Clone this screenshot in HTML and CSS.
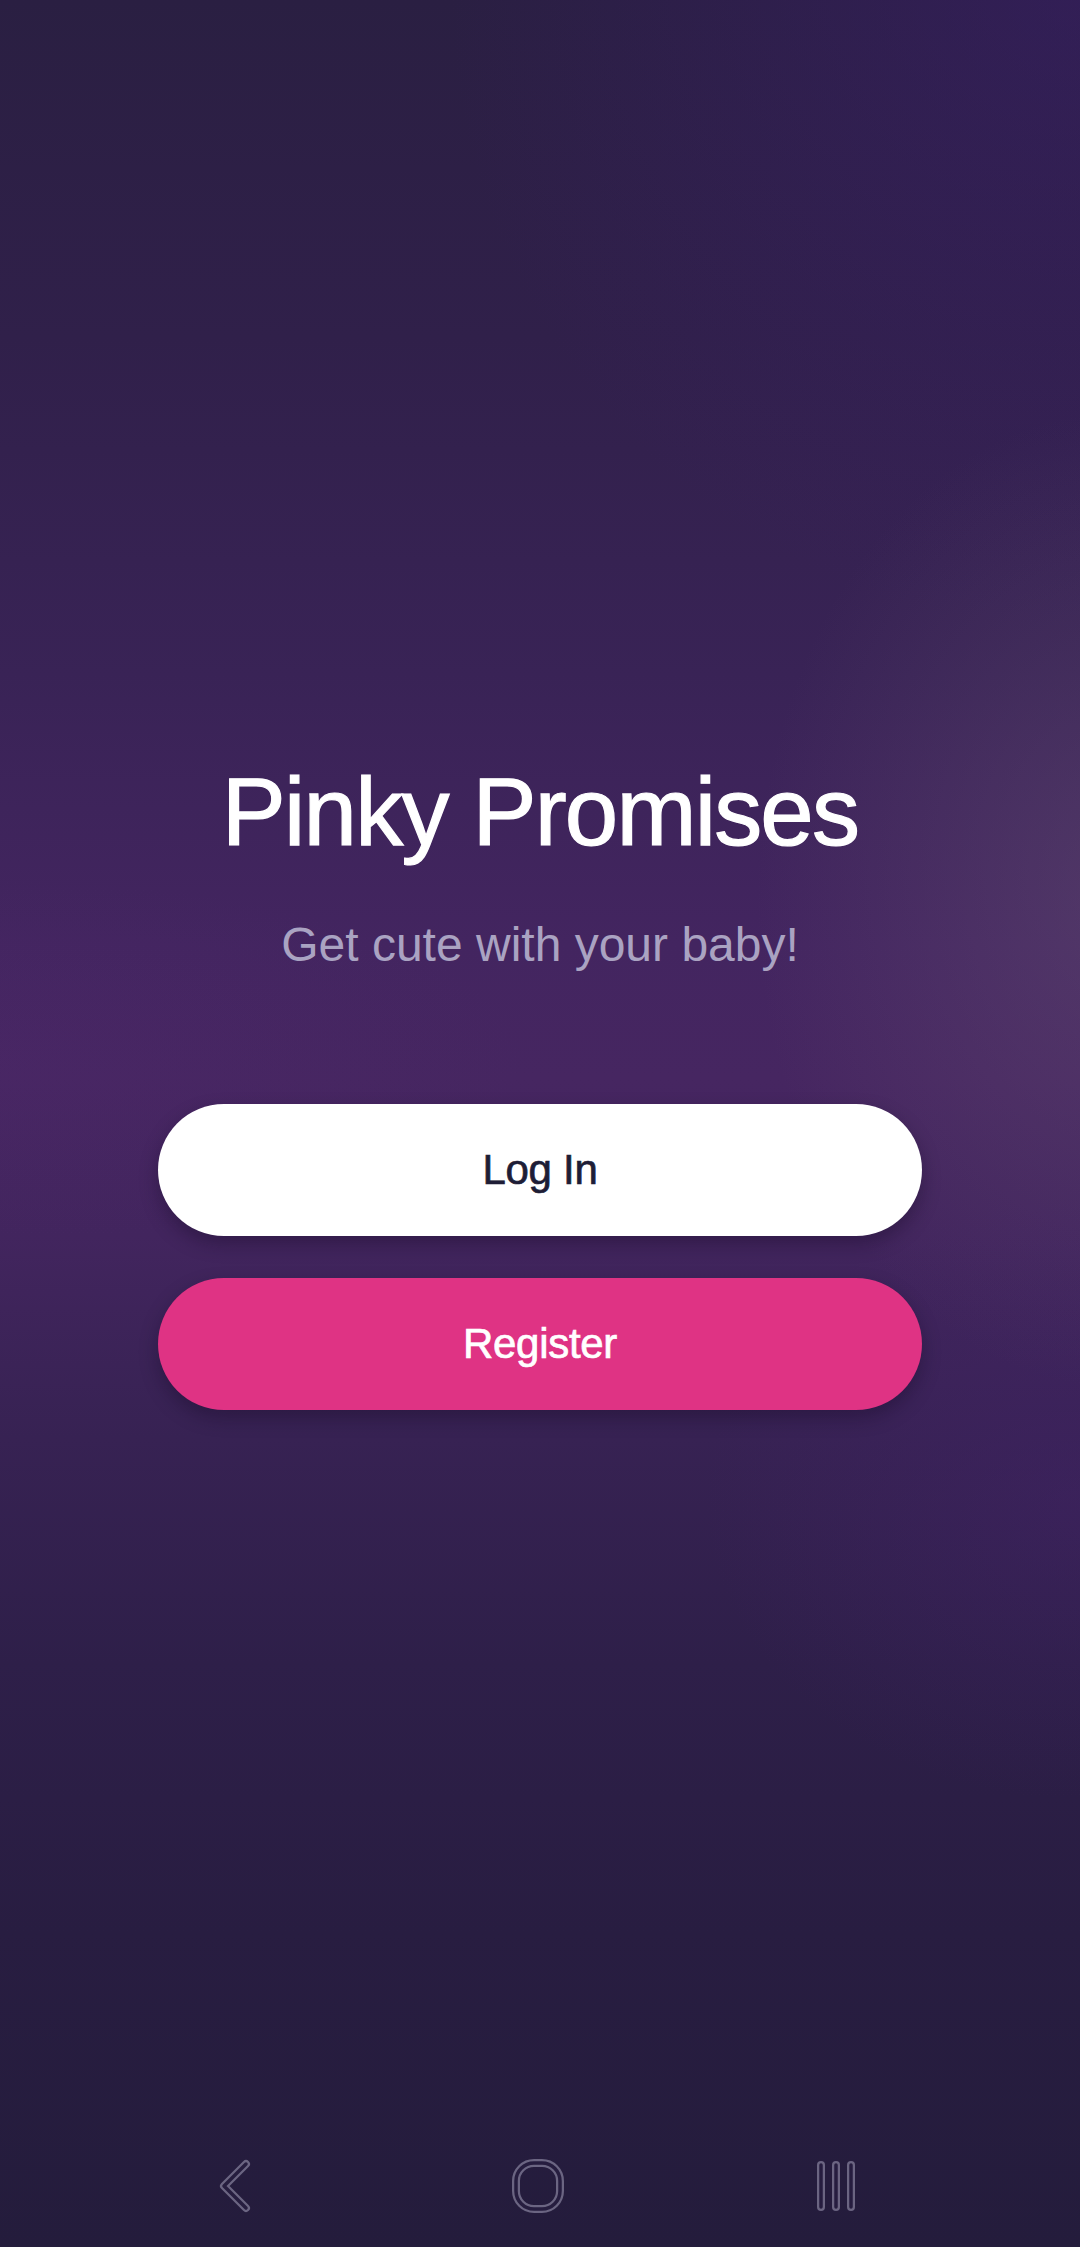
FILE: index.html
```html
<!DOCTYPE html>
<html lang="en">
<head>
<meta charset="utf-8">
<title>Pinky Promises</title>
<link rel="stylesheet" href="styles.css">
</head>
<body>
<div class="screen">
  <div class="glow"></div>
  <main class="content">
    <h1 class="title">Pinky Promises</h1>
    <p class="subtitle">Get cute with your baby!</p>
    <div class="actions">
      <button class="btn btn-login">Log In</button>
      <button class="btn btn-register">Register</button>
    </div>
  </main>
  <nav class="navbar">
    <div class="nav-slot">
      <svg class="nav-icon" width="44" height="56" viewBox="0 0 44 56">
        <polyline points="32,6 10,28 32,50" class="outer"/>
        <polyline points="32,6 10,28 32,50" class="inner"/>
      </svg>
    </div>
    <div class="nav-slot">
      <svg class="nav-icon" width="56" height="56" viewBox="0 0 56 56">
        <rect x="6" y="5" width="44" height="46" rx="18" class="outer"/>
        <rect x="6" y="5" width="44" height="46" rx="18" class="inner"/>
      </svg>
    </div>
    <div class="nav-slot">
      <svg class="nav-icon" width="56" height="56" viewBox="0 0 56 56">
        <line x1="9" y1="7" x2="9" y2="49" class="outer"/>
        <line x1="24" y1="7" x2="24" y2="49" class="outer"/>
        <line x1="39" y1="7" x2="39" y2="49" class="outer"/>
        <line x1="9" y1="7" x2="9" y2="49" class="inner"/>
        <line x1="24" y1="7" x2="24" y2="49" class="inner"/>
        <line x1="39" y1="7" x2="39" y2="49" class="inner"/>
      </svg>
    </div>
  </nav>
</div>
</body>
</html>
```
FILE: styles.css
```css
html, body {
  margin: 0;
  padding: 0;
  width: 1080px;
  height: 2247px;
  overflow: hidden;
  background: #251c3d;
}

.screen {
  position: relative;
  width: 1080px;
  height: 2247px;
  display: flex;
  flex-direction: column;
  font-family: "Liberation Sans", Arial, Helvetica, sans-serif;
  background:
    radial-gradient(ellipse 520px 700px at 1120px 900px, rgba(110, 90, 120, 0.35), rgba(110, 90, 120, 0) 70%),
    radial-gradient(ellipse 900px 900px at 1080px 0px, rgba(60, 30, 110, 0.45), rgba(60, 30, 110, 0) 70%),
    linear-gradient(180deg,
      #2a1f42 0%,
      #30204a 15%,
      #392356 30%,
      #432560 42%,
      #462661 48%,
      #42255e 55%,
      #372253 64%,
      #2e1f49 74%,
      #281d41 86%,
      #241c3c 100%);
  overflow: hidden;
}

.glow {
  position: absolute;
  left: 0;
  top: 0;
  width: 1080px;
  height: 2247px;
  background:
    radial-gradient(ellipse 700px 240px at 0px 1060px, rgba(80, 40, 110, 0.25), rgba(80, 40, 110, 0) 75%),
    radial-gradient(ellipse 500px 400px at 1080px 1500px, rgba(70, 35, 110, 0.35), rgba(70, 35, 110, 0) 75%);
  pointer-events: none;
}

.content {
  position: relative;
  flex: 1;
  display: flex;
  flex-direction: column;
  align-items: center;
  padding-top: 757px;
}

.title {
  margin: 0;
  font-size: 96px;
  line-height: 110px;
  font-weight: 400;
  letter-spacing: -1.8px;
  color: #ffffff;
  -webkit-text-stroke: 1.2px #ffffff;
}

.subtitle {
  margin: 50px 0 0;
  font-size: 48px;
  line-height: 56px;
  color: #aaa3c2;
}

.actions {
  margin-top: 131px;
  display: flex;
  flex-direction: column;
  gap: 42px;
}

.btn {
  width: 764px;
  height: 132px;
  border: none;
  border-radius: 66px;
  font-family: "Liberation Sans", Arial, Helvetica, sans-serif;
  font-size: 42px;
  letter-spacing: -0.3px;
  padding: 0;
  box-shadow: 0 8px 18px rgba(20, 10, 35, 0.35);
}

.btn-login {
  background: #ffffff;
  color: #1e1d36;
  -webkit-text-stroke: 0.7px #1e1d36;
}

.btn-register {
  background: #df3384;
  color: #ffffff;
  -webkit-text-stroke: 0.7px #ffffff;
}

.navbar {
  position: relative;
  height: 122px;
  display: grid;
  grid-template-columns: 302px 302px 302px;
  padding-left: 85px;
  align-items: center;
}

.nav-slot {
  display: flex;
  justify-content: center;
  align-items: center;
}

.nav-icon .outer {
  fill: none;
  stroke: #6b6582;
  stroke-width: 8;
  stroke-linecap: round;
  stroke-linejoin: round;
}

.nav-icon .inner {
  fill: none;
  stroke: #261d3f;
  stroke-width: 3.5;
  stroke-linecap: round;
  stroke-linejoin: round;
}
```
